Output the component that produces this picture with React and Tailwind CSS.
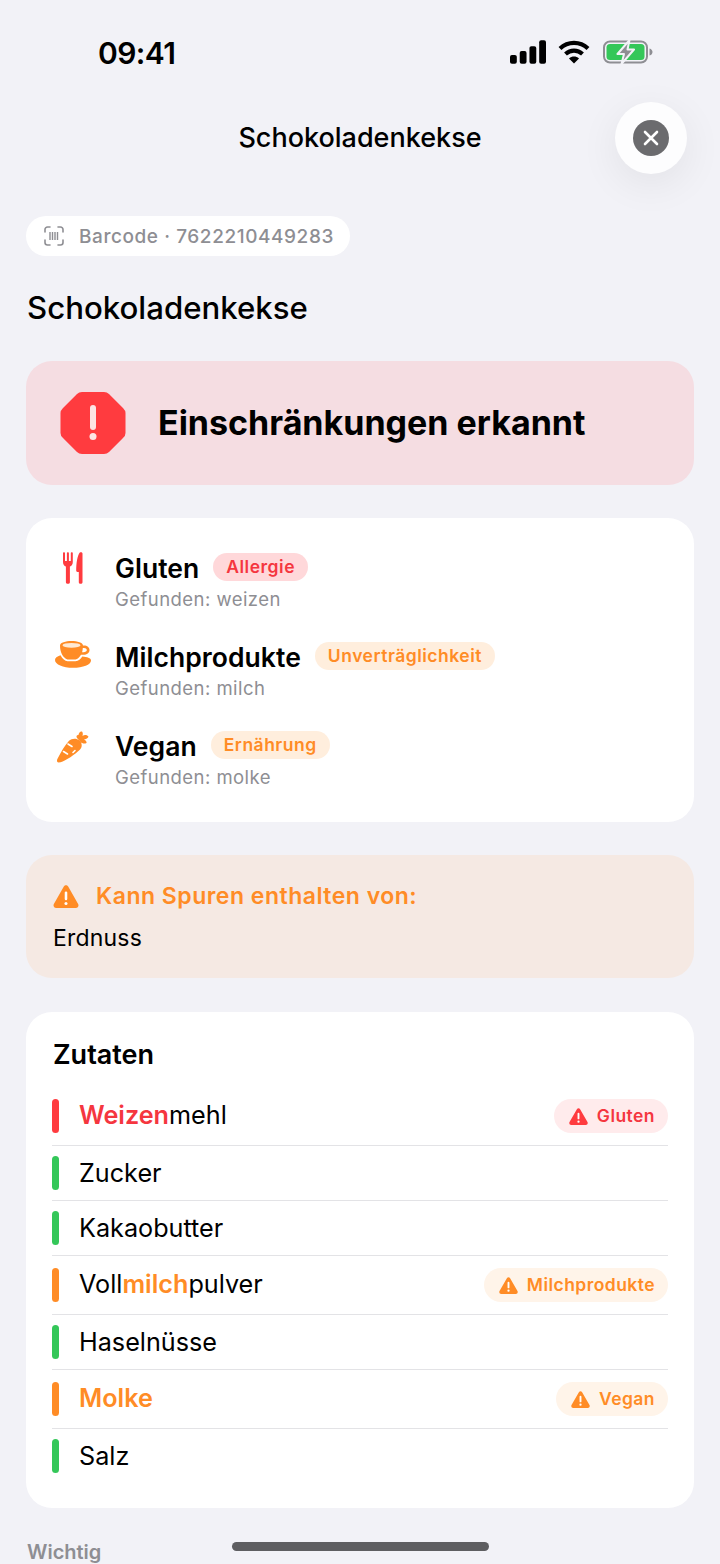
const Signal = () => (
  <svg width="36" height="24" viewBox="0 0 37 24" fill="#000">
    <rect x="0" y="15" width="7" height="9" rx="2" />
    <rect x="10" y="11" width="7" height="13" rx="2" />
    <rect x="20" y="6" width="7" height="18" rx="2" />
    <rect x="30" y="0" width="7" height="24" rx="2" />
  </svg>
);

const Wifi = () => (
  <svg width="32" height="24" viewBox="0 0 32 24" fill="none" stroke="#000" strokeWidth="4.2">
    <path d="M2 8.5 C10 1 22 1 30 8.5" />
    <path d="M7.5 14 C12.5 9.5 19.5 9.5 24.5 14" />
    <path d="M16 23.5 L11 18.4 C14 16 18 16 21 18.4 Z" fill="#000" stroke="none" />
  </svg>
);

const Battery = () => (
  <svg width="50" height="24" viewBox="0 0 50 24" fill="none">
    <rect x="1" y="1.5" width="43" height="21" rx="6" stroke="#8e8e93" strokeWidth="2" />
    <rect x="3.5" y="4" width="38" height="16" rx="3.5" fill="#34c759" />
    <path d="M46.5 8.5 C48.5 9 49.5 10.5 49.5 12 C49.5 13.5 48.5 15 46.5 15.5 Z" fill="#8e8e93" />
    <path d="M26.5 0 L14.5 14 H21 L18.5 24 L31 9.5 H24.5 Z" fill="#8e8e93" stroke="#f2f2f7" strokeWidth="2" strokeLinejoin="round" />
  </svg>
);

const BarcodeIcon = () => (
  <svg width="20" height="20" viewBox="0 0 20 20" fill="none" stroke="#8e8e93" strokeWidth="1.6" strokeLinecap="round">
    <path d="M1 6 V3.5 A2.5 2.5 0 0 1 3.5 1 H6" />
    <path d="M14 1 H16.5 A2.5 2.5 0 0 1 19 3.5 V6" />
    <path d="M19 14 V16.5 A2.5 2.5 0 0 1 16.5 19 H14" />
    <path d="M6 19 H3.5 A2.5 2.5 0 0 1 1 16.5 V14" />
    <path d="M6 6 V14 M8.5 6 V14 M11 6 V14 M13.5 6 V14" strokeLinecap="butt" strokeWidth="1.4" />
  </svg>
);

const StopIcon = () => (
  <svg width="66" height="64" viewBox="0 0 66 64" className="shrink-0">
    <path
      d="M22 1 H44 Q47 1 49 3 L63 17 Q65.5 19.5 65.5 22 V42 Q65.5 45 63 47 L49 61 Q47 63 44 63 H22 Q19 63 17 61 L3 47 Q0.5 45 0.5 42 V22 Q0.5 19.5 3 17 L17 3 Q19 1 22 1 Z"
      fill="#ff3b3f"
    />
    <rect x="30" y="14" width="6" height="25" rx="3" fill="#fde4e4" />
    <circle cx="33" cy="45.5" r="3.5" fill="#fde4e4" />
  </svg>
);

const Warn = ({ color, size = 19 }) => (
  <svg width={size} height={Math.round(size * 0.9)} viewBox="0 0 20 18" className="shrink-0">
    <path
      d="M8.3 1.2 C9.1 -0.2 10.9 -0.2 11.7 1.2 L19.5 14.8 C20.3 16.2 19.3 18 17.7 18 H2.3 C0.7 18 -0.3 16.2 0.5 14.8 Z"
      fill={color}
    />
    <rect x="9" y="5" width="2" height="7" rx="1" fill="#fff" />
    <circle cx="10" cy="14.5" r="1.2" fill="#fff" />
  </svg>
);

const ForkKnife = () => (
  <svg width="20" height="32" viewBox="0 0 20 32" fill="#ff3b3f" className="mt-[1px]">
    <path d="M0 1.2 C0 0 2 0 2 1.2 V9 H3.9 V1.2 C3.9 0 5.9 0 5.9 1.2 V9 H7.8 V1.2 C7.8 0 9.8 0 9.8 1.2 V10 C9.8 12.5 8.5 14 6.9 14.6 V30.2 C6.9 32.4 2.9 32.4 2.9 30.2 V14.6 C1.3 14 0 12.5 0 10 Z" />
    <path d="M16.8 0.5 C17.8 -0.2 19.5 0.2 19.5 1.6 V30.2 C19.5 32.4 15.8 32.4 15.8 30.2 V20 H14.6 C13.6 20 13.2 19.4 13.2 18.6 C13.2 11 14.4 3.5 16.8 0.5 Z" />
  </svg>
);

const Cup = () => (
  <svg width="36" height="27" viewBox="0 0 36 27" className="mt-[1px]">
    <path
      d="M5 4.5 C5 -1.5 28 -1.5 28 4.5 H29 C32.2 4.5 34.5 6.5 34.5 9 C34.5 11.7 32 13.8 28.5 13.8 H26 C24.5 16.5 22.5 18 20.5 18.5 H12.5 C8 17 5 11 5 4.5 Z M27.8 7 C27.7 8.5 27.5 10 27.1 11.2 H28.5 C30.5 11.2 31.8 10.3 31.8 9 C31.8 7.8 30.6 7 29 7 Z"
      fill="#ff8c26"
      fillRule="evenodd"
    />
    <ellipse cx="16.5" cy="4.3" rx="9" ry="2.4" fill="#ffe9d3" />
    <path
      d="M0 19 C0 17 2 15.3 5.5 14.2 C7.5 18 10 20 12.5 20.3 H20.5 C23.5 20 25.8 18 27.3 15.5 C32 15.8 36 17 36 19.5 C36 23.7 28 26.8 18 26.8 C8 26.8 0 23.5 0 19 Z"
      fill="#ff8c26"
    />
  </svg>
);

const Carrot = () => (
  <svg width="32" height="32" viewBox="0 0 32 32" fill="#ff8c26" className="mt-[2px]">
    <path d="M1.5 31.5 C-0.3 31.5 -0.3 29.3 0.5 27.8 C4 21 8 14 12 9.8 C14.5 7.3 19.5 6.8 22.5 9.5 C25.5 12.3 25.3 16 22.8 18.8 C18 23.5 9 29.8 3.5 31.2 Z" />
    <path d="M20 7 C19 5.5 19.5 3.8 21.5 4 C21.5 2.5 23 0 25 0.5 C26 1.5 26 3.5 25.5 5 C27.5 3.5 30.5 4 31.5 5.8 C30.5 7.8 28.5 8.5 26.8 8.5 C28.5 9 30 10.5 29.5 12 C27.5 13 25 12.5 23.5 11 Z" />
    <path d="M11 13 L15 15.5 M6.5 20.5 L10.5 23 M16 21.5 L18 19.5" stroke="#fff" strokeWidth="1.6" strokeLinecap="round" fill="none" />
  </svg>
);

const restrictions = [
  { name: 'Gluten', tag: 'Allergie', found: 'weizen', icon: <ForkKnife />, tagClass: 'bg-[#ffd8da] text-[#f5363f]' },
  { name: 'Milchprodukte', tag: 'Unverträglichkeit', found: 'milch', icon: <Cup />, tagClass: 'bg-[#ffeedd] text-[#ff8c26]' },
  { name: 'Vegan', tag: 'Ernährung', found: 'molke', icon: <Carrot />, tagClass: 'bg-[#ffeedd] text-[#ff8c26]' },
];

const red = 'text-[#f5363f]';
const orange = 'text-[#ff8c26]';

const ingredients = [
  { bar: 'bg-[#ff3b3f]', text: <><span className={`font-semibold ${red}`}>Weizen</span>mehl</>, badge: 'Gluten', warn: '#ff3b3f', badgeClass: `bg-[#ffebec] ${red}` },
  { bar: 'bg-[#34c759]', text: 'Zucker' },
  { bar: 'bg-[#34c759]', text: 'Kakaobutter' },
  { bar: 'bg-[#ff8c26]', text: <>Voll<span className={`font-semibold ${orange}`}>milch</span>pulver</>, badge: 'Milchprodukte', warn: '#ff8c26', badgeClass: `bg-[#fff4e9] ${orange}` },
  { bar: 'bg-[#34c759]', text: 'Haselnüsse' },
  { bar: 'bg-[#ff8c26]', text: <span className={`font-semibold ${orange}`}>Molke</span>, badge: 'Vegan', warn: '#ff8c26', badgeClass: `bg-[#fff4e9] ${orange}` },
  { bar: 'bg-[#34c759]', text: 'Salz' },
];

const App = () => {
  return (
    <div className="relative w-[720px] h-[1564px] overflow-hidden bg-[#f2f2f7] text-black font-['Inter',sans-serif]">
      {/* Status bar */}
      <div className="flex h-[106px] items-start justify-between pl-[98px] pr-[67px] pt-[35px]">
        <span className="text-[30px] leading-[36px] font-semibold tracking-[-0.6px]">09:41</span>
        <div className="flex items-center pt-[5px]">
          <Signal />
          <div className="ml-[12px] mr-[13px]">
            <Wifi />
          </div>
          <Battery />
        </div>
      </div>

      {/* Nav title */}
      <div className="flex h-[64px] items-center justify-center">
        <h1 className="text-[27px] leading-[34px] font-medium">Schokoladenkekse</h1>
      </div>

      {/* Close button */}
      <div className="absolute left-[615px] top-[102px] flex h-[72px] w-[72px] items-center justify-center rounded-full bg-[#fdfdfe] shadow-[0_10px_40px_rgba(0,0,0,0.07)]">
        <div className="flex h-[36px] w-[36px] items-center justify-center rounded-full bg-[#6b6b6e]">
          <svg width="16" height="16" viewBox="0 0 16 16" stroke="#fff" strokeWidth="2.6" strokeLinecap="round">
            <path d="M2 2 L14 14 M14 2 L2 14" />
          </svg>
        </div>
      </div>

      <div className="flex flex-col px-[26px] pt-[46px]">
        {/* Barcode pill */}
        <div className="flex h-[40px] w-[324px] items-center gap-[15px] rounded-full bg-white pl-[18px]">
          <BarcodeIcon />
          <span className="mt-[1px] text-[19px] leading-[24px] font-medium tracking-[0.57px] text-[#8e8e93]">Barcode · 7622210449283</span>
        </div>

        <h2 className="mt-[32px] pl-[1px] text-[31.2px] leading-[40px] font-medium">Schokoladenkekse</h2>

        {/* Verdict */}
        <div className="mt-[33px] flex h-[124px] items-center gap-[32px] rounded-[26px] bg-[#f5dde2] pl-[34px]">
          <StopIcon />
          <span className="text-[34px] leading-[42px] font-bold">Einschränkungen erkannt</span>
        </div>

        {/* Restrictions */}
        <div className="mt-[33px] flex h-[304px] flex-col gap-[29px] rounded-[26px] bg-white pl-[27px] pt-[33px]">
          {restrictions.map((r) => (
            <div key={r.name} className="flex h-[60px]">
              <div className="flex w-[40px] shrink-0 items-start justify-center">{r.icon}</div>
              <div className="ml-[22px] flex flex-col">
                <div className="flex h-[34px] items-center gap-[14px]">
                  <span className="text-[26.5px] leading-[34px] font-semibold tracking-[0.05px]">{r.name}</span>
                  <span className={`mb-[2px] rounded-full px-[13px] text-[17.5px] leading-[28px] font-semibold tracking-[0.5px] ${r.tagClass}`}>{r.tag}</span>
                </div>
                <span className="mt-[2px] text-[18.5px] leading-[24px] tracking-[0.45px] text-[#8e8e93]">Gefunden: {r.found}</span>
              </div>
            </div>
          ))}
        </div>

        {/* Traces */}
        <div className="mt-[33px] flex h-[123px] flex-col rounded-[26px] bg-[#f5e9e3] pl-[27px] pt-[26px]">
          <div className="flex h-[30px] items-center gap-[17px]">
            <Warn color="#ff8c26" size={26} />
            <span className={`text-[23px] leading-[30px] font-semibold tracking-[0.5px] ${orange}`}>Kann Spuren enthalten von:</span>
          </div>
          <span className="mt-[12px] text-[23px] leading-[30px] tracking-[0.2px]">Erdnuss</span>
        </div>

        {/* Ingredients */}
        <div className="mt-[34px] h-[496px] rounded-[26px] bg-white px-[26px] pt-[26px]">
          <h3 className="mb-[15px] pl-[1px] text-[27px] leading-[34px] font-semibold">Zutaten</h3>
          {ingredients.map((item, i) => (
            <div
              key={i}
              className={`flex items-center ${item.badge ? 'py-[12px]' : 'py-[10px]'} ${i < ingredients.length - 1 ? 'border-b border-[#e3e3e6]' : ''}`}
            >
              <div className={`h-[34px] w-[7px] shrink-0 rounded-full ${item.bar}`} />
              <span className={`ml-[20px] flex-1 text-[25.2px] leading-[34px] ${item.badge ? '-translate-y-[1px]' : ''}`}>{item.text}</span>
              {item.badge && (
                <span className={`flex h-[34px] items-center gap-[9px] rounded-full pl-[15px] pr-[13px] text-[17.5px] font-semibold tracking-[0.45px] ${item.badgeClass}`}>
                  <Warn color={item.warn} />
                  {item.badge}
                </span>
              )}
            </div>
          ))}
        </div>

        <div className="mt-[31px] pl-[1px] text-[20px] leading-[26px] font-semibold text-[#8e8e93]">Wichtig</div>
      </div>

      {/* Home indicator */}
      <div className="absolute left-[232px] top-[1542px] h-[9px] w-[257px] rounded-full bg-[#5e5e61]" />
    </div>
  );
};

export default App;
